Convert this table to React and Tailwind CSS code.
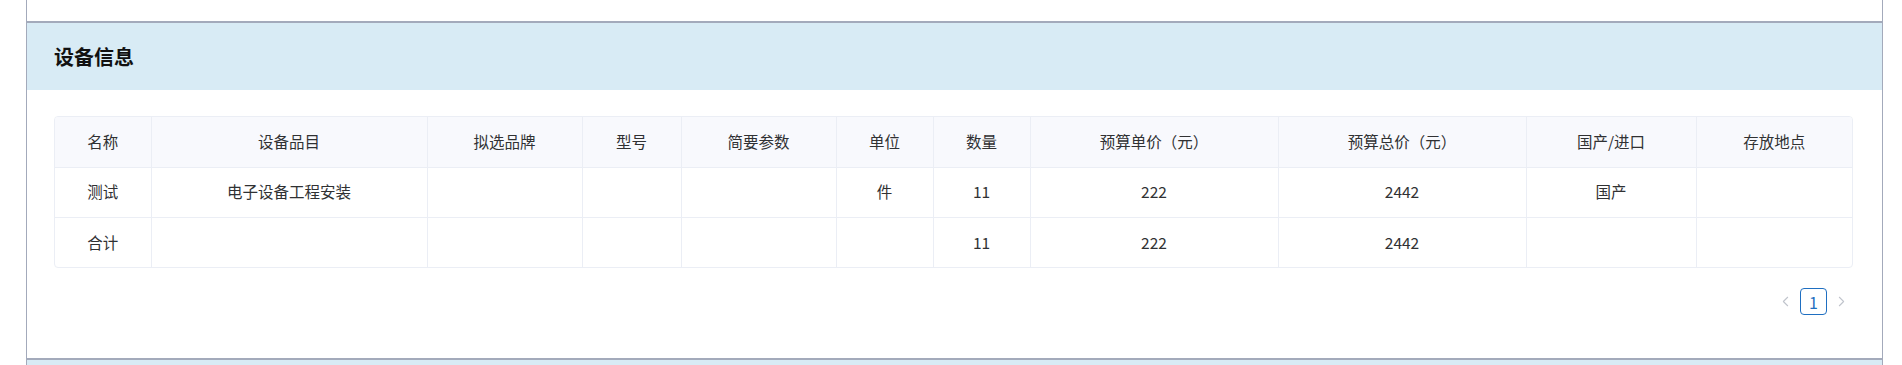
import { ChevronLeft, ChevronRight } from "lucide-react";

const columns = [
  { title: "名称", width: "w-[96px]" },
  { title: "设备品目", width: "w-[276px]" },
  { title: "拟选品牌", width: "w-[155px]" },
  { title: "型号", width: "w-[99px]" },
  { title: "简要参数", width: "w-[155px]" },
  { title: "单位", width: "w-[97px]" },
  { title: "数量", width: "w-[97px]" },
  { title: "预算单价（元）", width: "w-[248px]" },
  { title: "预算总价（元）", width: "w-[248px]" },
  { title: "国产/进口", width: "w-[170px]" },
  { title: "存放地点", width: "w-[156px]" },
];

const rows = [
  ["测试", "电子设备工程安装", "", "", "", "件", "11", "222", "2442", "国产", ""],
  ["合计", "", "", "", "", "", "11", "222", "2442", "", ""],
];

const EquipmentTable = () => (
  <div className="w-[1799px] overflow-hidden rounded-[4px] border border-[#ebeef5]">
    <table className="w-[1797px] table-fixed border-collapse text-[15.5px] text-[#303133]">
      <colgroup>
        {columns.map((c) => (
          <col key={c.title} className={c.width} />
        ))}
      </colgroup>
      <thead>
        <tr className="h-[50px] bg-[#f8f9fd]">
          {columns.map((c, i) => (
            <th
              key={c.title}
              className={`font-normal text-center ${i > 0 ? "border-l border-[#ebeef5]" : ""}`}
            >
              {c.title}
            </th>
          ))}
        </tr>
      </thead>
      <tbody>
        {rows.map((row, r) => (
          <tr key={r} className="h-[50px] border-t border-[#ebeef5]">
            {row.map((cell, i) => (
              <td
                key={i}
                className={`text-center ${i > 0 ? "border-l border-[#ebeef5]" : ""}`}
              >
                {cell}
              </td>
            ))}
          </tr>
        ))}
      </tbody>
    </table>
  </div>
);

export default function App() {
  return (
    <div
      className="min-h-[365px] bg-white pl-[26px] pr-[19px]"
      style={{ fontFamily: '"Microsoft YaHei", "Noto Sans CJK SC", sans-serif' }}
    >
      <div className="flex h-[365px] flex-col border-x border-[#a3aabb]">
        <div className="h-[21px] bg-white" />
        <div className="border-t-2 border-[#a3aabb]">
          <div className="flex h-[67px] items-center bg-[#d8ebf5] px-[27px]">
            <h2 className="text-[20px] font-bold text-[#111]">设备信息</h2>
          </div>
          <div className="h-[268px] bg-white px-[27px] pt-[26px]">
            <EquipmentTable />
            <div className="mt-[20px] flex w-[1799px] items-center justify-end gap-[6px] pr-[3px]">
              <ChevronLeft className="h-[17px] w-[17px] text-[#c0c4cc]" strokeWidth={1.5} />
              <span className="flex h-[27px] w-[27px] items-center justify-center rounded-[4px] border border-[#1f6fc1] text-[16px] text-[#1f6fc1]">
                1
              </span>
              <ChevronRight className="h-[17px] w-[17px] text-[#c0c4cc]" strokeWidth={1.5} />
            </div>
          </div>
        </div>
        <div className="flex-1 border-t-2 border-[#a3aabb] bg-[#d8ebf5]" />
      </div>
    </div>
  );
}
